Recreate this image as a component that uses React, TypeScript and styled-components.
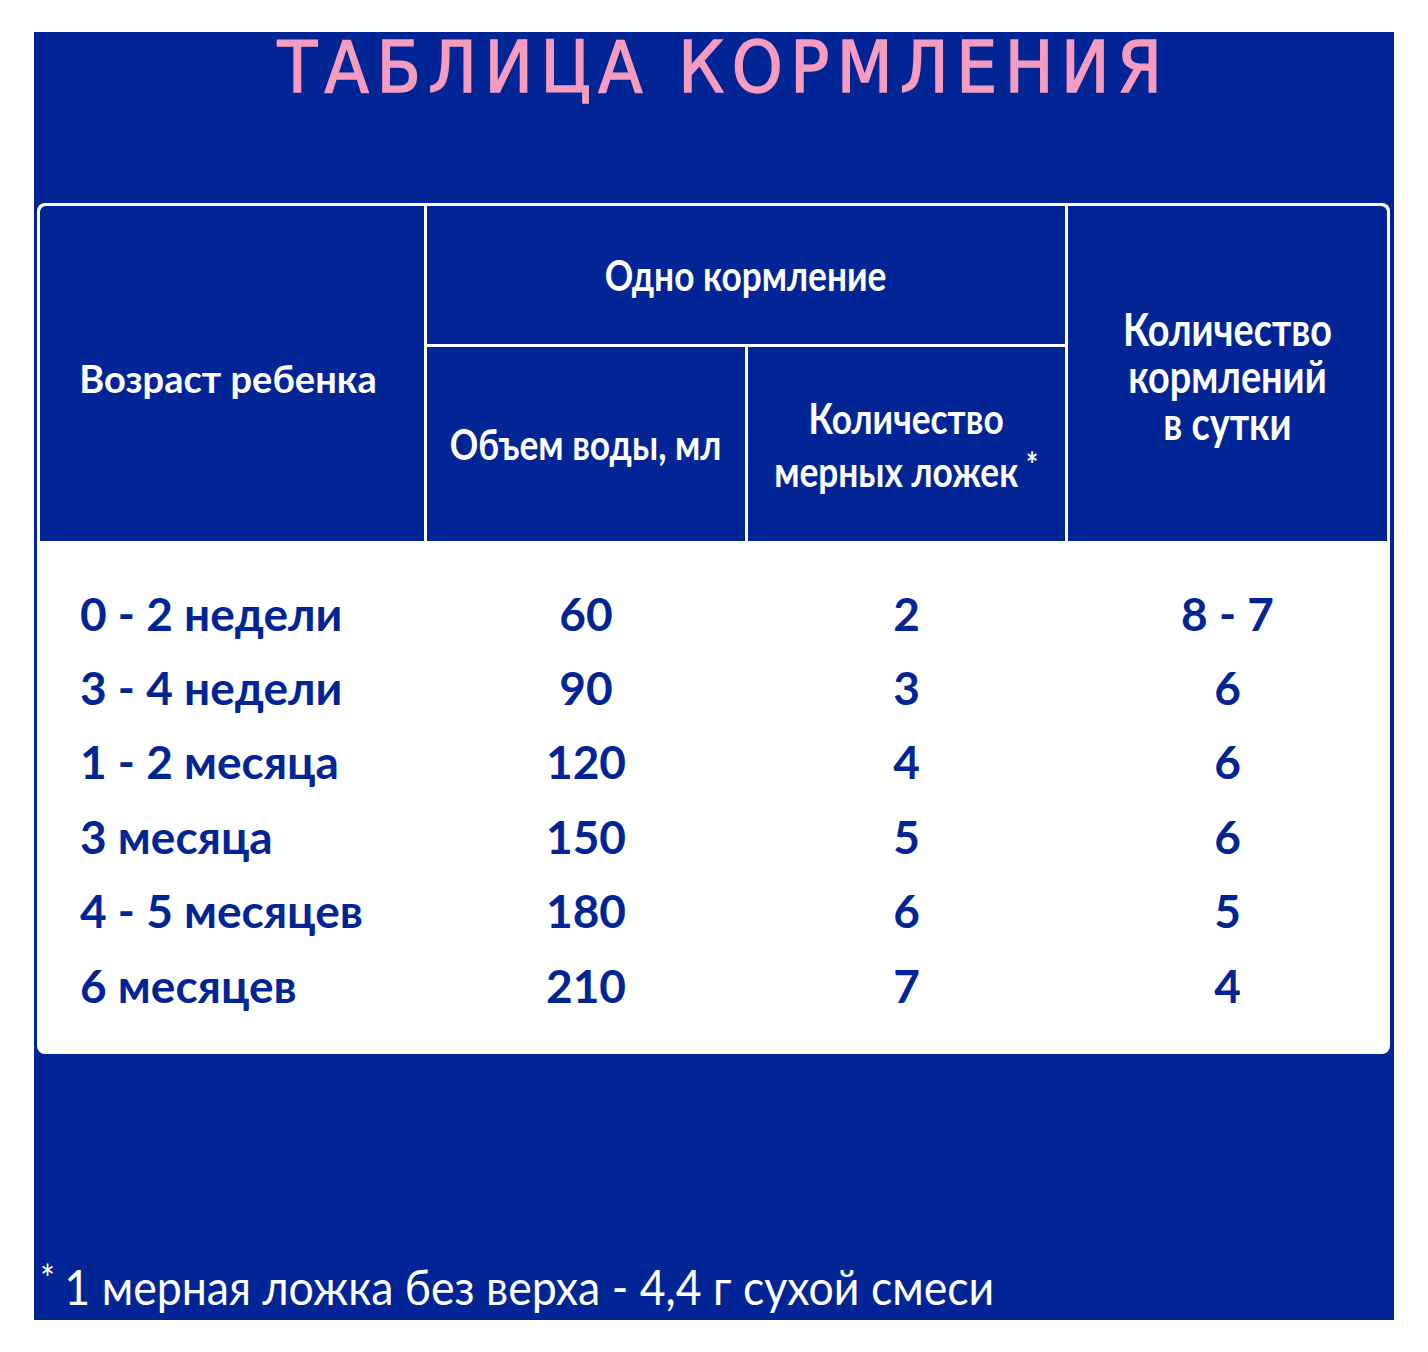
import React from "react";
import styled, { createGlobalStyle } from "styled-components";

// ─── Data ─────────────────────────────────────────────────────────────────────
type Row = { age: string; water: string; spoons: string; feeds: string };

const rows: Row[] = [
  { age: "0 - 2 недели", water: "60", spoons: "2", feeds: "8 - 7" },
  { age: "3 - 4 недели", water: "90", spoons: "3", feeds: "6" },
  { age: "1 - 2 месяца", water: "120", spoons: "4", feeds: "6" },
  { age: "3 месяца", water: "150", spoons: "5", feeds: "6" },
  { age: "4 - 5 месяцев", water: "180", spoons: "6", feeds: "5" },
  { age: "6 месяцев", water: "210", spoons: "7", feeds: "4" },
];

const BLUE = "#022596";
const PINK = "#f59cbf";
const COLS = "384px 318px 317px 1fr";

// ─── Styled Components ────────────────────────────────────────────────────────
const GlobalStyle = createGlobalStyle`
  html, body { margin: 0; padding: 0; background: #fff; }
  * { box-sizing: border-box; }
`;

const Page = styled.div`
  padding: 32px 0 0 34px;
  width: 1428px;
  height: 1352px;
`;

const Panel = styled.div`
  width: 1360px;
  height: 1288px;
  background: ${BLUE};
  display: flex;
  flex-direction: column;
  padding: 0 4px 0 3px;
`;

const TitleBar = styled.div`
  height: 171px;
  display: flex;
  justify-content: center;
`;

const Title = styled.h1`
  margin: 0 0 0 20px;
  font-family: "DejaVu Sans Condensed", "DejaVu Sans", sans-serif;
  font-weight: 400;
  font-size: 72px;
  line-height: 70px;
  letter-spacing: 7.5px;
  color: ${PINK};
  -webkit-text-stroke: 1.4px ${PINK};
`;

const TableBox = styled.div`
  background: #fff;
  border-radius: 8px;
  padding: 3px 3px 0;
  height: 851px;
  display: flex;
  flex-direction: column;
`;

const HeadGrid = styled.div`
  display: grid;
  grid-template-columns: ${COLS};
  grid-template-rows: 138px 194px;
  gap: 3px;
  background: #fff;
`;

const HeadCell = styled.div<{ $corner?: "left" | "right"; $drop?: number; $shift?: number }>`
  background: ${BLUE};
  color: #fff;
  display: flex;
  align-items: center;
  justify-content: center;
  text-align: center;
  padding-top: ${(p) => p.$drop ?? 0}px;
  padding-right: ${(p) => p.$shift ?? 0}px;
  font-family: Lato, "Open Sans", sans-serif;
  font-weight: 700;
  font-size: 38px;
  line-height: 46px;
  border-top-left-radius: ${(p) => (p.$corner === "left" ? "6px" : "0")};
  border-top-right-radius: ${(p) => (p.$corner === "right" ? "6px" : "0")};
`;

// PT Sans Narrow look: a squeezed Lato
const Narrow = styled.span<{ $size?: number; $lh?: number }>`
  display: inline-block;
  font-size: ${(p) => p.$size ?? 42}px;
  line-height: ${(p) => p.$lh ?? 46}px;
  white-space: nowrap;
  transform: scaleX(0.84);
`;

const Star = styled.span`
  font-size: 34px;
  margin-left: 9px;
  vertical-align: 10px;
`;

const Body = styled.div`
  padding: 35px 0 0;
`;

const DataRow = styled.div`
  display: grid;
  grid-template-columns: ${COLS};
  column-gap: 3px;
  height: 74.4px;
  align-items: center;
  font-family: Lato, "Open Sans", sans-serif;
  font-weight: 700;
  font-size: 46px;
  color: ${BLUE};
`;

const DataCell = styled.div<{ $left?: boolean }>`
  text-align: ${(p) => (p.$left ? "left" : "center")};
  padding-left: ${(p) => (p.$left ? "40px" : "0")};
  white-space: nowrap;
`;

const Spacer = styled.div`
  flex: 1;
`;

const Footnote = styled.p`
  margin: 0 0 6px 3px;
  font-family: Lato, "Open Sans", sans-serif;
  font-weight: 400;
  font-size: 48px;
  line-height: 54px;
  color: #fff;
  white-space: nowrap;
  transform: scaleX(0.93);
  transform-origin: left center;
`;

const FootStar = styled.span`
  font-size: 38px;
  vertical-align: 12px;
  margin-right: 10px;
`;

// ─── Component ────────────────────────────────────────────────────────────────
const App: React.FC = () => (
  <>
    <GlobalStyle />
    <Page>
      <Panel>
        <TitleBar>
          <Title>ТАБЛИЦА КОРМЛЕНИЯ</Title>
        </TitleBar>

        <TableBox>
          <HeadGrid>
            <HeadCell $corner="left" $drop={8} $shift={8} style={{ gridRow: "1 / 3" }}>
              Возраст ребенка
            </HeadCell>
            <HeadCell style={{ gridColumn: "2 / 4" }}>
              <Narrow>Одно кормление</Narrow>
            </HeadCell>
            <HeadCell $corner="right" $drop={5} style={{ gridColumn: 4, gridRow: "1 / 3" }}>
              <Narrow $size={45} $lh={47}>
                Количество
                <br />
                кормлений
                <br />в сутки
              </Narrow>
            </HeadCell>
            <HeadCell>
              <Narrow>Объем воды, мл</Narrow>
            </HeadCell>
            <HeadCell>
              <Narrow>
                Количество
                <br />
                мерных ложек<Star>*</Star>
              </Narrow>
            </HeadCell>
          </HeadGrid>

          <Body>
            {rows.map((r) => (
              <DataRow key={r.age}>
                <DataCell $left>{r.age}</DataCell>
                <DataCell>{r.water}</DataCell>
                <DataCell>{r.spoons}</DataCell>
                <DataCell>{r.feeds}</DataCell>
              </DataRow>
            ))}
          </Body>
        </TableBox>

        <Spacer />
        <Footnote>
          <FootStar>*</FootStar>1 мерная ложка без верха - 4,4 г сухой смеси
        </Footnote>
      </Panel>
    </Page>
  </>
);

export default App;
